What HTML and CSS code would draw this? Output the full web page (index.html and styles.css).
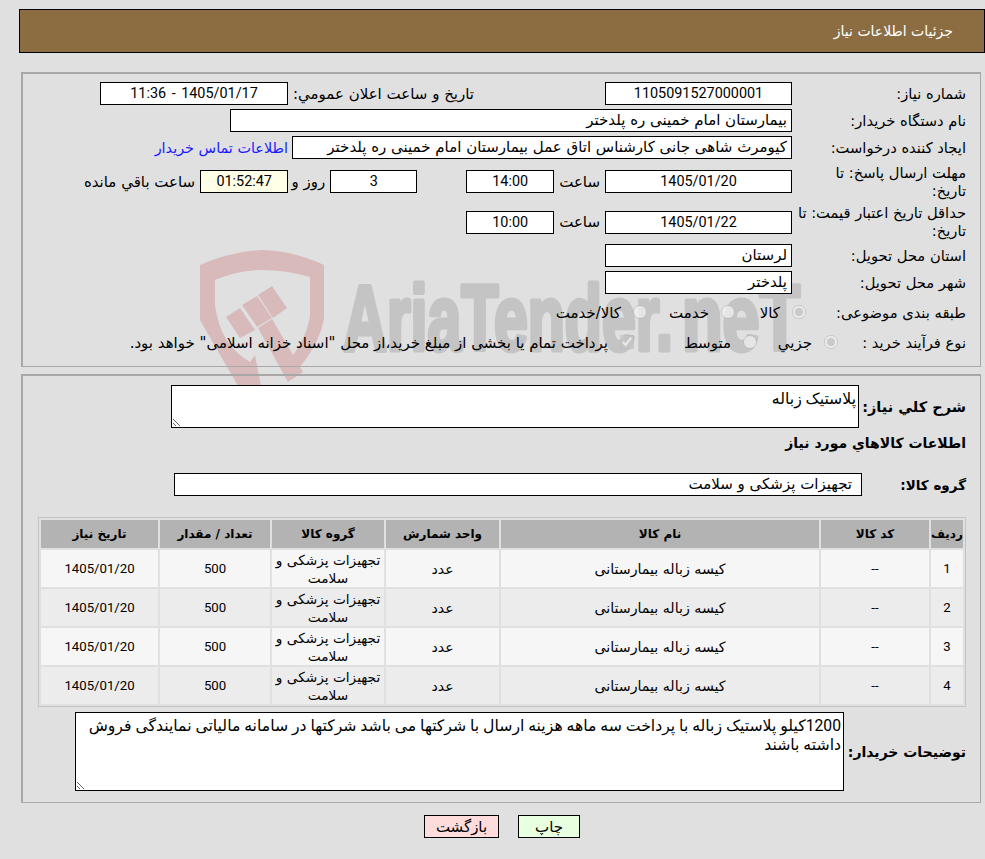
FILE: index.html
```html
<!DOCTYPE html>
<html lang="fa" dir="rtl">
<head>
<meta charset="utf-8">
<title>جزئیات اطلاعات نیاز</title>
<link rel="stylesheet" href="styles.css">
</head>
<body>
<svg class="watermark" width="985" height="400" viewBox="0 0 985 400" aria-hidden="true">
  <path class="wm-red" fill-rule="evenodd" d="M200 265 Q232 251 262 250 Q294 251 324 265 L324 318 Q320 345 293 375 L284 366 Q306 342 310 316 L310 277 Q286 270 262 270 Q238 270 215 280 L215 305 Q220 345 250 362 L255 355 L261 386 L238 386 L200 320 Z"/>
  <polygon class="wm-red" points="226,317 240,308 255,330 240,338"/>
  <polygon class="wm-red" points="242,305 257,296 272,318 257,327"/>
  <polygon class="wm-red" points="258,295 272,286 287,308 273,318"/>
  <polygon class="wm-red" points="258,328 272,319 303,372 288,382"/>
  <text class="wm-word" x="343" y="350" textLength="330" lengthAdjust="spacingAndGlyphs" direction="ltr">AriaTender.</text>
  <text class="wm-word" x="682" y="350" textLength="118" lengthAdjust="spacingAndGlyphs" direction="ltr">neT</text>
</svg>

<header class="title-bar">جزئیات اطلاعات نیاز</header>

<main class="content">
<section class="panel panel-top">
  <div class="row row-std">
    <div class="label">شماره نیاز:</div>
    <div class="box box-main center">1105091527000001</div>
    <div class="label-second">تاریخ و ساعت اعلان عمومي:</div>
    <div class="box box-date center">1405/01/17 - 11:36</div>
  </div>
  <div class="row row-std">
    <div class="label">نام دستگاه خریدار:</div>
    <div class="box box-buyer">بیمارستان امام خمینی ره پلدختر</div>
  </div>
  <div class="row row-std">
    <div class="label">ایجاد کننده درخواست:</div>
    <div class="box box-creator">کیومرث شاهی جانی کارشناس اتاق عمل بیمارستان امام خمینی ره پلدختر</div>
    <a class="contact" href="#">اطلاعات تماس خریدار</a>
  </div>
  <div class="row row-two">
    <div class="label">مهلت ارسال پاسخ: تا<br>تاریخ:</div>
    <div class="box box-main center">1405/01/20</div>
    <div class="unit">ساعت</div>
    <div class="box box-time center">14:00</div>
    <div class="box box-days center">3</div>
    <div class="unit unit-day">روز و</div>
    <div class="box box-timer center">01:52:47</div>
    <div class="unit">ساعت باقي مانده</div>
  </div>
  <div class="row row-two row-validity">
    <div class="label">حداقل تاریخ اعتبار قیمت: تا<br>تاریخ:</div>
    <div class="box box-main center">1405/01/22</div>
    <div class="unit">ساعت</div>
    <div class="box box-time center">10:00</div>
  </div>
  <div class="row row-std">
    <div class="label">استان محل تحویل:</div>
    <div class="box box-main">لرستان</div>
  </div>
  <div class="row row-std">
    <div class="label">شهر محل تحویل:</div>
    <div class="box box-main">پلدختر</div>
  </div>
  <div class="row row-radio">
    <div class="label">طبقه بندی موضوعی:</div>
    <div class="options options-cat">
      <label class="opt opt-kala"><input type="radio" disabled checked name="cat"><span>کالا</span></label>
      <label class="opt opt-khed"><input type="radio" disabled name="cat"><span>خدمت</span></label>
      <label class="opt"><input type="radio" disabled name="cat"><span>کالا/خدمت</span></label>
    </div>
  </div>
  <div class="row row-process">
    <div class="label">نوع فرآیند خرید :</div>
    <div class="options options-proc">
      <label class="opt opt-jozi"><input type="radio" disabled checked name="proc"><span>جزیي</span></label>
      <label class="opt opt-mot"><input type="radio" disabled name="proc"><span>متوسط</span></label>
      <label class="opt"><input type="checkbox" disabled checked><span>پرداخت تمام یا بخشی از مبلغ خرید،از محل "اسناد خزانه اسلامی" خواهد بود.</span></label>
    </div>
  </div>
</section>

<section class="panel panel-bottom">
  <div class="desc-row">
    <div class="strong-label">شرح کلي نیاز:</div>
    <textarea class="area area-short" readonly>پلاستیک زباله</textarea>
  </div>
  <h2 class="section-title">اطلاعات کالاهاي مورد نیاز</h2>
  <div class="group-row">
    <div class="strong-label group-label">گروه کالا:</div>
    <div class="box box-group">تجهیزات پزشکی و سلامت</div>
  </div>
  <table class="items">
    <colgroup>
      <col class="c1"><col class="c2"><col class="c3"><col class="c4"><col class="c5"><col class="c6"><col class="c7">
    </colgroup>
    <thead>
      <tr><th>ردیف</th><th>کد کالا</th><th>نام کالا</th><th>واحد شمارش</th><th>گروه کالا</th><th>تعداد / مقدار</th><th>تاریخ نیاز</th></tr>
    </thead>
    <tbody>
      <tr><td class="num">1</td><td class="num">--</td><td>کیسه زباله بیمارستانی</td><td>عدد</td><td class="grp">تجهیزات پزشکی و سلامت</td><td class="num">500</td><td class="num">1405/01/20</td></tr>
      <tr><td class="num">2</td><td class="num">--</td><td>کیسه زباله بیمارستانی</td><td>عدد</td><td class="grp">تجهیزات پزشکی و سلامت</td><td class="num">500</td><td class="num">1405/01/20</td></tr>
      <tr><td class="num">3</td><td class="num">--</td><td>کیسه زباله بیمارستانی</td><td>عدد</td><td class="grp">تجهیزات پزشکی و سلامت</td><td class="num">500</td><td class="num">1405/01/20</td></tr>
      <tr><td class="num">4</td><td class="num">--</td><td>کیسه زباله بیمارستانی</td><td>عدد</td><td class="grp">تجهیزات پزشکی و سلامت</td><td class="num">500</td><td class="num">1405/01/20</td></tr>
    </tbody>
  </table>
  <div class="notes-row">
    <div class="strong-label notes-label">توضیحات خریدار:</div>
    <textarea class="area area-notes" readonly>1200کیلو پلاستیک زباله با پرداخت سه ماهه هزینه ارسال با شرکتها می باشد شرکتها در سامانه مالیاتی نمایندگی فروش داشته باشند</textarea>
  </div>
</section>

<div class="actions">
  <button class="btn btn-print" type="button">چاپ</button>
  <button class="btn btn-back" type="button">بازگشت</button>
</div>
</main>
</body>
</html>
```
FILE: styles.css
```css
* { box-sizing: border-box; }
html, body { margin: 0; padding: 0; }
body {
  position: relative;
  width: 985px;
  height: 859px;
  overflow: hidden;
  background: #e0e0e0;
  color: #000;
  font: 15px/18px "DejaVu Sans", Tahoma, sans-serif;
}
.watermark { position: absolute; left: 0; top: 0; pointer-events: none; }
.wm-red { fill: #d8babb; }
.wm-word {
  fill: #c4c4c4;
  stroke: #c4c4c4;
  stroke-width: 5px;
  stroke-linejoin: round;
  font: bold 92px "Liberation Sans", sans-serif;
}

.title-bar {
  position: relative;
  height: 44px;
  margin: 9px 0 0 19px;
  padding-right: 31px;
  background: #8c6d42;
  border: 1px solid #000;
  color: #fff;
  line-height: 42px;
  font-size: 14px;
}
.content { position: relative; padding: 19px 4px 0 21px; }
.panel { border: 1px solid #a8a8a8; border-width: 2px 1px 1px 2px; }
.panel-top { height: 295px; padding: 8px 14px 0 0; }
.panel-bottom { height: 429px; margin-top: 7px; padding: 9px 14px 0 0; }

.row { display: flex; align-items: center; margin-bottom: 4px; }
.row-std { height: 23px; }
.row-two { height: 37px; }
.row-validity { height: 36px; }
.row-radio { height: 30px; }
.row-process { height: 22px; }
.label { flex: 0 0 174px; font-size: 14.7px; }
.box {
  height: 23px;
  padding: 0 4px;
  background: #fff;
  border: 1px solid #000;
  line-height: 21px;
  white-space: nowrap;
  overflow: hidden;
}
.center { text-align: center; font-family: Roboto, "DejaVu Sans", sans-serif; font-size: 14.4px; }
.box-main { flex: 0 0 187px; }
.box-date { flex: 0 0 188px; word-spacing: 2px; }
.box-buyer { flex: 0 0 562px; }
.box-creator { flex: 0 0 500px; }
.box-time { flex: 0 0 88px; }
.box-days { flex: 0 0 87px; margin-right: 49px; }
.box-timer { flex: 0 0 88px; background: #ffffe8; }
.box-group { flex: 0 0 688px; padding-right: 9px; }
.label-second { margin-right: 131px; width: 186px; white-space: nowrap; }
.contact { margin-right: 4px; color: #1a1aff; text-decoration: none; white-space: nowrap; font-size: 14.4px; }
.unit { margin: 0 5px; white-space: nowrap; }
.unit-day { width: 28px; margin-left: 9px; }
.options { display: flex; align-items: center; }
.options-cat { margin-right: -14px; }
.options-proc { margin-right: -46px; }
.opt { display: flex; align-items: center; white-space: nowrap; }
.opt input { width: 14px; height: 14px; margin: -3px 0 0 12px; flex: none; }
.opt span { display: block; }
.opt-kala { width: 71px; }
.opt-khed { width: 88px; }
.opt-jozi { width: 81px; }
.opt-mot { width: 123px; }

.desc-row { display: flex; align-items: center; height: 43px; }
.strong-label { font-weight: bold; font-size: 14.5px; white-space: nowrap; }
.desc-row .strong-label { flex: 0 0 107px; }
.area {
  display: block;
  margin: 0;
  padding: 3px 2px;
  background: #fff;
  border: 1px solid #000;
  border-radius: 0;
  outline: none;
  font: 15.7px/19px Roboto, "DejaVu Sans", sans-serif;
}
.area-short { width: 688px; height: 43px; }
.section-title { margin: 6px 0 0; height: 18px; font-size: 14px; line-height: 18px; font-weight: bold; }
.group-row { display: flex; align-items: center; height: 23px; margin-top: 21px; }
.group-label { flex: 0 0 104px; font-size: 13.5px; }

.items {
  width: 928px;
  margin: 21px 0 0 0;
  border: 1px solid #c4c4c4;
  border-spacing: 2px;
  table-layout: fixed;
  font-size: 14.2px;
  text-align: center;
}
.c1 { width: 32px; } .c2 { width: 108px; } .c3 { width: 318px; } .c4 { width: 113px; }
.c5 { width: 112px; } .c6 { width: 110px; } .c7 { width: 117px; }
.items th { height: 28px; padding: 0; background: #b3b3b3; font-size: 12px; }
.items td { height: 37px; padding: 0; line-height: 18px; }
.items td.num { font-family: Roboto, "DejaVu Sans", sans-serif; font-size: 13.2px; }
.items td.grp { font-size: 13.7px; }
.items tbody tr:nth-child(odd) td { background: #f6f6f6; }
.items tbody tr:nth-child(even) td { background: #ececec; }

.notes-row { display: flex; align-items: center; height: 79px; margin-top: 5px; }
.notes-label { flex: 0 0 122px; font-size: 14px; }
.area-notes { width: 769px; height: 79px; }

.actions { display: flex; justify-content: center; gap: 19px; margin-top: 12px; padding-left: 2px; }
.btn {
  height: 23px;
  padding: 0;
  border: 1px solid #000;
  border-radius: 0;
  color: #000;
  font: 15px "DejaVu Sans", Tahoma, sans-serif;
}
.btn-print { width: 62px; background: #e8ffe0; }
.btn-back { width: 75px; background: #ffdcdc; }
```
